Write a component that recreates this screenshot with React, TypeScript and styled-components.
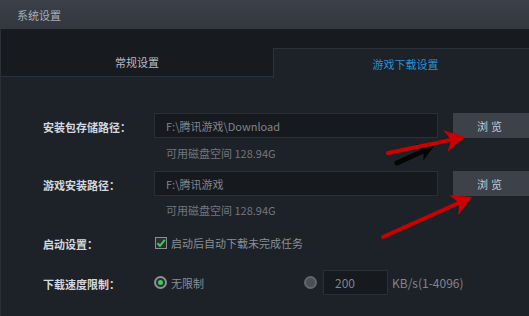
import React from "react";
import styled, { createGlobalStyle } from "styled-components";

const Global = createGlobalStyle`
  html, body { margin: 0; padding: 0; background: #1d2128; }
  * { box-sizing: border-box; }
`;

const Window = styled.div`
  position: relative;
  width: 529px;
  height: 316px;
  overflow: hidden;
  display: flex;
  flex-direction: column;
  font-family: "Noto Sans CJK SC", "Noto Sans", sans-serif;
  font-size: 11px;
  background: #1d2128;
`;

const TitleBar = styled.div`
  height: 29px;
  flex: none;
  display: flex;
  align-items: center;
  padding-left: 17px;
  background: linear-gradient(#3a3f48, #333840);
  color: #a9adb3;
`;

const TabBar = styled.div`
  height: 48px;
  flex: none;
  display: flex;
  align-items: flex-end;
  background: #171a1f;
  border-left: 1px solid #2a2f37;
`;

const Tab = styled.div<{ $active?: boolean }>`
  height: ${(p) => (p.$active ? "30px" : "29px")};
  display: flex;
  align-items: center;
  justify-content: center;
  padding-top: ${(p) => (p.$active ? "1px" : "0")};
  padding-left: ${(p) => (p.$active ? "8px" : "0")};
  width: ${(p) => (p.$active ? "auto" : "272px")};
  flex: ${(p) => (p.$active ? "1" : "none")};
  color: ${(p) => (p.$active ? "#2a8fd4" : "#b8bcc2")};
  background: ${(p) => (p.$active ? "#1d2128" : "#171a1f")};
  border-top: ${(p) => (p.$active ? "1px solid #2c323b" : "none")};
  border-left: ${(p) => (p.$active ? "1px solid #2c323b" : "none")};
  border-bottom: ${(p) => (p.$active ? "none" : "1px solid #2c323b")};
  margin-bottom: ${(p) => (p.$active ? "-1px" : "0")};
`;

const Content = styled.div`
  flex: 1;
  padding: 36px 0 0 42px;
  border-left: 1px solid #2a2f37;
  display: flex;
  flex-direction: column;
`;

const Row = styled.div<{ $mt?: number }>`
  display: flex;
  align-items: center;
  height: 25px;
  margin-top: ${(p) => p.$mt ?? 0}px;
`;

const Label = styled.div`
  width: 111px;
  flex: none;
  color: #d5d8dc;
  font-weight: 700;
  padding-top: 3px;
`;

const PathInput = styled.div`
  width: 284px;
  height: 25px;
  flex: none;
  background: #16191e;
  border: 1px solid #2b3038;
  color: #80858c;
  display: flex;
  align-items: center;
  padding-left: 11px;
`;

const Browse = styled.div`
  margin-left: 15px;
  width: 80px;
  height: 25px;
  flex: none;
  background: #3c414a;
  color: #c9ccd1;
  display: flex;
  align-items: center;
  justify-content: center;
  padding-right: 4px;
  letter-spacing: 3px;
`;

const Hint = styled.div<{ $mt?: number }>`
  margin-top: ${(p) => p.$mt ?? 0}px;
  padding-left: 123px;
  color: #72777e;
  height: 16px;
  line-height: 16px;
`;

const Check = styled.div`
  width: 12px;
  height: 12px;
  border: 1px solid #8a8f96;
  background: #2a2e35;
  display: flex;
  align-items: center;
  justify-content: center;
  margin-left: 1px;
`;

const OptionText = styled.span`
  color: #8a8f96;
  margin-left: 4px;
`;

const RadioOption = styled.div<{ $w?: number }>`
  display: flex;
  align-items: center;
  width: ${(p) => (p.$w ? `${p.$w}px` : "auto")};
`;

const Radio = styled.div<{ $on?: boolean }>`
  width: 13px;
  height: 13px;
  border-radius: 50%;
  border: 2px solid ${(p) => (p.$on ? "#8c9198" : "#62666d")};
  background: ${(p) => (p.$on ? "#2a2e35" : "#4a4e56")};
  display: flex;
  align-items: center;
  justify-content: center;
  &::after {
    content: "";
    display: ${(p) => (p.$on ? "block" : "none")};
    width: 5px;
    height: 5px;
    border-radius: 50%;
    background: #3ccf4e;
  }
`;

const SpeedInput = styled.div`
  width: 65px;
  height: 25px;
  margin-left: 6px;
  background: #16191e;
  border: 1px solid #2b3038;
  color: #80858c;
  display: flex;
  align-items: center;
  padding-left: 11px;
  font-size: 12px;
`;

const Unit = styled.span`
  color: #80858c;
  margin-left: 4px;
  font-size: 12px;
`;

const Overlay = styled.svg`
  position: absolute;
  left: 0;
  top: 0;
  pointer-events: none;
`;

type Pt = [number, number];

function Arrow({ tail, tip, color, head = 20, half = 11, width = 4 }: { tail: Pt; tip: Pt; color: string; head?: number; half?: number; width?: number }) {
  const dx = tip[0] - tail[0];
  const dy = tip[1] - tail[1];
  const len = Math.hypot(dx, dy);
  const ux = dx / len;
  const uy = dy / len;
  const px = -uy;
  const py = ux;
  const bx = tip[0] - ux * head;
  const by = tip[1] - uy * head;
  const nx = tip[0] - ux * head * 0.7;
  const ny = tip[1] - uy * head * 0.7;
  const pts = [
    tip,
    [bx + px * half, by + py * half],
    [nx, ny],
    [bx - px * half, by - py * half],
  ]
    .map((p) => p.join(","))
    .join(" ");
  return (
    <g>
      <line x1={tail[0]} y1={tail[1]} x2={nx} y2={ny} stroke={color} strokeWidth={width} strokeLinecap="round" />
      <polygon points={pts} fill={color} />
    </g>
  );
}

export default function App() {
  return (
    <Window>
      <Global />
      <TitleBar>系统设置</TitleBar>
      <TabBar>
        <Tab>常规设置</Tab>
        <Tab $active>游戏下载设置</Tab>
      </TabBar>
      <Content>
        <Row>
          <Label>安装包存储路径：</Label>
          <PathInput>F:\腾讯游戏\Download</PathInput>
          <Browse>浏览</Browse>
        </Row>
        <Hint $mt={7}>可用磁盘空间 128.94G</Hint>
        <Row $mt={10}>
          <Label>游戏安装路径：</Label>
          <PathInput>F:\腾讯游戏</PathInput>
          <Browse>浏览</Browse>
        </Row>
        <Hint $mt={6}>可用磁盘空间 128.94G</Hint>
        <Row $mt={12}>
          <Label>启动设置：</Label>
          <Check>
            <svg width="10" height="10" viewBox="0 0 10 10">
              <path d="M1.5 5.2 L4 7.8 L8.8 1.8" fill="none" stroke="#3ccf4e" strokeWidth="2" />
            </svg>
          </Check>
          <OptionText>启动后自动下载未完成任务</OptionText>
        </Row>
        <Row $mt={15}>
          <Label>下载速度限制：</Label>
          <RadioOption $w={150}>
            <Radio $on />
            <OptionText>无限制</OptionText>
          </RadioOption>
          <RadioOption>
            <Radio />
            <SpeedInput>200</SpeedInput>
            <Unit>KB/s(1-4096)</Unit>
          </RadioOption>
        </Row>
      </Content>
      <Overlay width="529" height="316" viewBox="0 0 529 316">
        <Arrow tail={[397, 163]} tip={[434, 146]} color="#050505" head={16} half={9} width={5} />
        <Arrow tail={[388, 153]} tip={[465, 137]} color="#cc0000" />
        <Arrow tail={[383, 237]} tip={[472, 197]} color="#cc0000" />
      </Overlay>
    </Window>
  );
}
